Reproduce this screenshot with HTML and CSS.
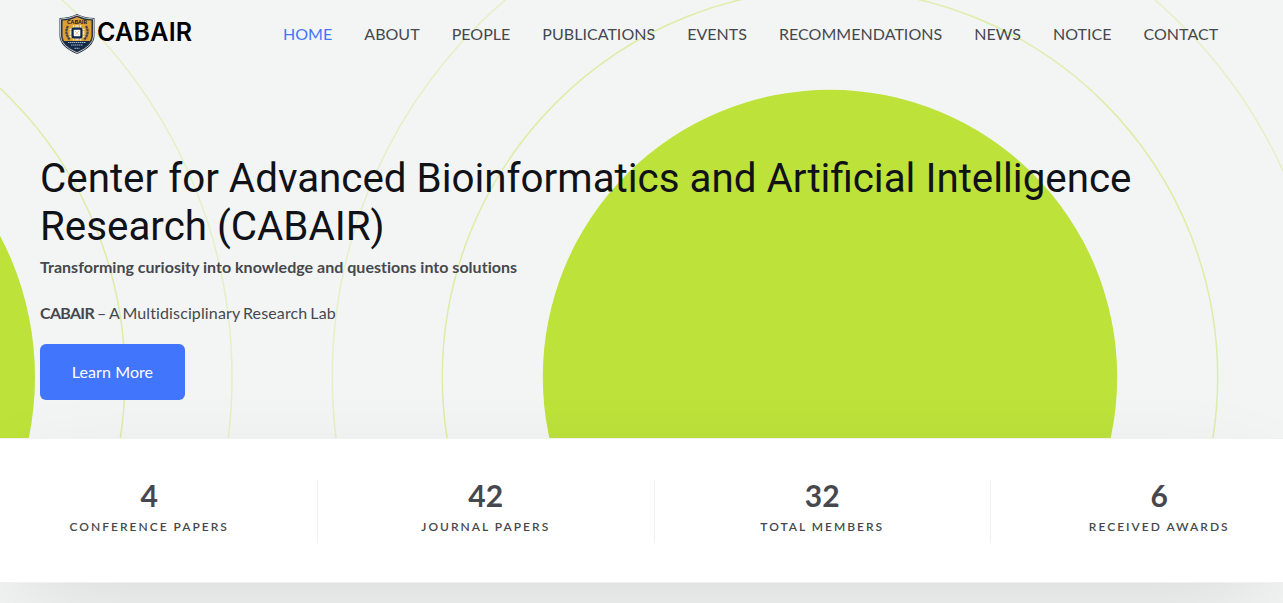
FILE: index.html
```html
<!DOCTYPE html>
<html lang="en">
<head>
<meta charset="utf-8">
<title>CABAIR</title>
<link rel="stylesheet" href="styles.css">
</head>
<body>
<div class="page">
  <svg class="backdrop" width="1283" height="438" viewBox="0 0 1283 438" aria-hidden="true">
    <g fill="none" stroke="#bde23a">
      <circle cx="830" cy="377" r="387.7" stroke-opacity=".42" stroke-width="1.5"/>
      <circle cx="830" cy="377" r="497.7" stroke-opacity=".26" stroke-width="1.5"/>
      <circle cx="-271" cy="377" r="396" stroke-opacity=".42" stroke-width="1.5"/>
      <circle cx="-271" cy="377" r="503" stroke-opacity=".26" stroke-width="1.5"/>
    </g>
    <circle cx="830" cy="377" r="287.2" fill="#bde23a"/>
    <circle cx="-268" cy="377" r="303" fill="#bde23a"/>
  </svg>
  <header class="header">
    <a class="brand">
      <svg class="shield" width="38" height="42" viewBox="0 0 38 42" aria-hidden="true">
        <path d="M19 1 Q27 5 36.500 5 V23 Q36 34 19 41 Q2 34 1.500 23 V5 Q11 5 19 1Z" fill="#273444"/>
        <path d="M19 2.200 Q27 6 35.500 6 V23 Q35 33 19 39.800 Q3 33 2.500 23 V6 Q11 6 19 2.200Z" fill="none" stroke="#b9c0c8" stroke-width="1"/>
        <path d="M19 4 Q26 7.500 33.500 7.500 V23 Q33 26 32 28 H6 Q5 26 4.500 23 V7.500 Q12 7.500 19 4Z" fill="#dfa02f"/>
        <path d="M6 28 H32 Q28 34 19 38 Q10 34 6 28Z" fill="#10284a"/>
        <text x="19" y="11" text-anchor="middle" textLength="20" class="shield-name">CABAIR</text>
        <path d="M10 13 Q6 20 12 27 M28 13 Q32 20 26 27" fill="none" stroke="#41464a" stroke-width="2.200" stroke-dasharray="2.500 .5"/>
        <path d="M15.500 12V27.500M18 12V27.500M20 12V27.500M22.500 12V27.500M11.500 16.500H26.500M11.500 19H26.500M11.500 21H26.500M11.500 23.500H26.500" stroke="#f6ecd4" stroke-width="1.300"/>
        <rect x="13.500" y="14.500" width="11" height="11" rx="2" fill="#10284a"/>
        <rect x="15.700" y="16.700" width="6.600" height="6.600" rx=".8" fill="#fff"/>
        <path d="M17 18L21 22M21 18L17 22" stroke="#e9c98c" stroke-width=".8"/>
        <path d="M10 29.500H28M13 32H25M16.500 35.300H21.500" stroke="#a9b7c6" stroke-width="1" stroke-dasharray="1.500 .5"/>
      </svg>
      <span class="brand-name">CABAIR</span>
    </a>
    <nav class="nav">
      <a class="nav-link active">HOME</a>
      <a class="nav-link">ABOUT</a>
      <a class="nav-link">PEOPLE</a>
      <a class="nav-link">PUBLICATIONS</a>
      <a class="nav-link">EVENTS</a>
      <a class="nav-link">RECOMMENDATIONS</a>
      <a class="nav-link">NEWS</a>
      <a class="nav-link">NOTICE</a>
      <a class="nav-link">CONTACT</a>
    </nav>
  </header>
  <main class="hero">
    <h1 class="title">Center for Advanced Bioinformatics and Artificial Intelligence Research (CABAIR)</h1>
    <p class="tagline">Transforming curiosity into knowledge and questions into solutions</p>
    <p class="about"><strong>CABAIR</strong> – A Multidisciplinary Research Lab</p>
    <a class="button">Learn More</a>
  </main>
  <section class="stats">
    <div class="stats-row">
      <div class="stat"><div class="number">4</div><div class="label">CONFERENCE PAPERS</div></div>
      <div class="stat"><div class="number">42</div><div class="label">JOURNAL PAPERS</div></div>
      <div class="stat"><div class="number">32</div><div class="label">TOTAL MEMBERS</div></div>
      <div class="stat"><div class="number">6</div><div class="label">RECEIVED AWARDS</div></div>
    </div>
  </section>
</div>
</body>
</html>
```
FILE: styles.css
```css
* { box-sizing: border-box; }
body { margin: 0; font-family: Lato, sans-serif; font-size: 16px; color: #46484d; font-variant-ligatures: no-common-ligatures; }
.page { position: relative; isolation: isolate; height: 603px; overflow: hidden; background: #f3f5f5; }
.backdrop { position: absolute; top: 0; left: 0; z-index: -1; }
.header { display: flex; align-items: center; height: 68px; padding-left: 58px; }
.brand { display: flex; align-items: center; width: 225px; }
.shield { display: block; flex: none; }
.shield-name { font: 900 5.5px Lato, sans-serif; fill: #17202c; }
.brand-name { margin: -4px 0 0 1px; font: 600 25px/30px Inter, sans-serif; letter-spacing: .25px; color: #000; white-space: nowrap; }
.nav { display: flex; gap: 32px; }
.nav-link { line-height: 24px; letter-spacing: .035px; white-space: nowrap; }
.active { color: #4175fc; }
.hero { height: 370px; padding: 87px 40px 0; }
.title { margin: 0; font: 400 40.330px/48px Roboto, sans-serif; color: #101218; }
.tagline { margin: 4px 0 0; line-height: 24px; font-weight: 700; letter-spacing: .022px; }
.about { margin: 22px 0 0; line-height: 24px; letter-spacing: .130px; word-spacing: -1.200px; }
.about strong { font-weight: 700; letter-spacing: -.700px; }
.button { display: flex; align-items: center; justify-content: center; width: 145px; height: 56px; margin-top: 19px; padding-bottom: 2px; border-radius: 6px; background: #4175fc; color: #fff; letter-spacing: .080px; }
.stats { height: 145px; padding-top: 41px; background: #fff; border-top: 1px solid #f0f1f1; border-bottom: 1px solid #f0f1f1; box-shadow: 0 30px 100px -20px rgba(0, 0, 0, .12); }
.stats-row { display: grid; grid-template-columns: repeat(4, 336.5px); width: 1346px; margin-left: -18.500px; }
.stat { height: 63px; text-align: center; border-right: 1px solid #f0f1f1; }
.stat:last-child { border-right: 0; }
.number { position: relative; top: -3px; font-size: 30px; line-height: 36px; font-weight: 700; }
.label { margin-top: 2px; font-size: 12px; line-height: 18px; letter-spacing: 2px; font-weight: 600; }
```
